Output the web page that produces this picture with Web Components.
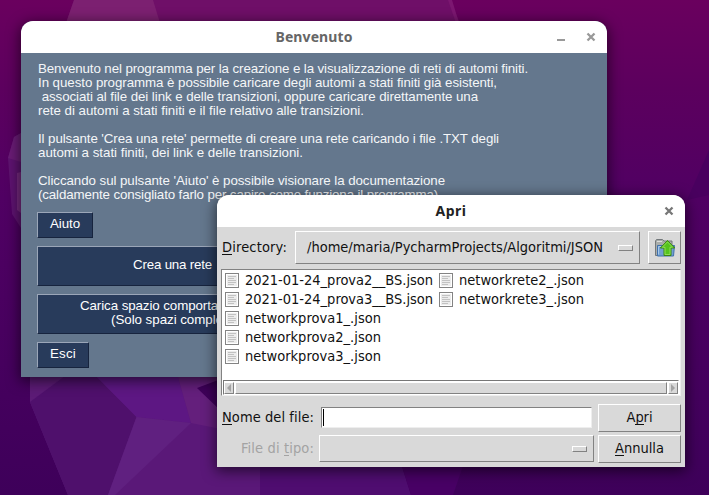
<!DOCTYPE html>
<html lang="it"><head><meta charset="utf-8"><title>Benvenuto</title>
<style>html,body{margin:0;width:709px;height:495px;overflow:hidden}</style></head><body>
<desk-top></desk-top>
<script>
const define=(name,html,setup)=>customElements.define(name,class extends HTMLElement{
  constructor(){super();const t=document.createElement('template');t.innerHTML=html;
    this.attachShadow({mode:'open'}).append(t.content.cloneNode(true));}
  connectedCallback(){if(setup)setup(this,this.shadowRoot);}
});

/* Text run whose tracking is adjusted to a given width */
define('fit-text',`<style>:host{display:block;white-space:pre;width:max-content}span{display:inline-block}</style><span><slot></slot></span>`,(el,r)=>{
  const s=r.querySelector('span'),w=+el.getAttribute('w'),n=el.textContent.length;
  if(w){const d=(w-s.getBoundingClientRect().width)/n;s.style.letterSpacing=d+'px';}
});

define('app-window',`<style>
:host{display:flex;flex-direction:column;box-sizing:border-box;border-radius:12px 12px 0 0;overflow:hidden;background:var(--body);box-shadow:0 3px 14px 1px rgba(0,0,0,.6)}
header{height:32px;flex:none;background:#fff;display:grid;grid-template-columns:1fr auto 1fr;align-items:center;font:bold 14px "Noto Sans","Open Sans",sans-serif;color:var(--title)}
.c{grid-column:2;margin-top:-2px}.b{display:flex;justify-content:flex-end;gap:20px;padding-right:11px;align-items:center}
main{flex:1;min-height:0;display:flex;flex-direction:column}
</style><header><div class="c"><slot name="title"></slot></div><div class="b"><slot name="controls"></slot></div></header><main><slot></slot></main>`);

define('win-icon',`<style>:host{display:block;width:10px;height:10px;color:var(--ic)}svg{display:block}</style><svg width="10" height="10"></svg>`,(el,r)=>{
  r.querySelector('svg').innerHTML=el.getAttribute('kind')==='min'?'<path d="M1 7h8v2H1z" fill="currentColor"/>':'<path d="M1.500 1.500l7 7M8.500 1.500L1.500 8.500" stroke="currentColor" stroke-width="2.3"/>';
});

define('navy-button',`<style>:host{display:flex;box-sizing:border-box;border:1px solid;border-color:#9ba6b8 #17243e #17243e #9ba6b8;background:#283b5b;flex-direction:column;align-items:center;justify-content:center;color:#fff;line-height:14px}</style><slot></slot>`);

define('welcome-body',`<style>
:host{display:flex;flex-direction:column;align-items:flex-start;gap:8px;padding:8px 16px;font:13.33px/14px "Liberation Sans",Arial,sans-serif;color:#f4f6f8}
.t{padding:1px 0 0 1px;height:142px}.t p{margin:0 0 14px}
.a{width:56px;height:26px;padding-bottom:2px}.wide{width:271px;height:40px}.wide.p{padding-bottom:3px}.wide.q{padding-bottom:2px}.e{width:52px;height:26px;padding-bottom:2px}
</style><div class="t">
<p><fit-text w="490">Benvenuto nel programma per la creazione e la visualizzazione di reti di automi finiti.</fit-text><fit-text w="459">In questo programma è possibile caricare degli automi a stati finiti già esistenti,</fit-text><fit-text w="440"> associati al file dei link e delle transizioni, oppure caricare direttamente una</fit-text><fit-text w="326">rete di automi a stati finiti e il file relativo alle transizioni.</fit-text></p>
<p><fit-text w="461">Il pulsante 'Crea una rete' permette di creare una rete caricando i file .TXT degli</fit-text><fit-text w="265">automi a stati finiti, dei link e delle transizioni.</fit-text></p>
<p><fit-text w="407">Cliccando sul pulsante 'Aiuto' è possibile visionare la documentazione</fit-text><fit-text w="400">(caldamente consigliato farlo per capire come funziona il programma)</fit-text></p></div>
<navy-button class="a"><fit-text w="30">Aiuto</fit-text></navy-button>
<navy-button class="wide p"><fit-text w="79">Crea una rete</fit-text></navy-button>
<navy-button class="wide q"><fit-text w="185">Carica spazio comportamentale</fit-text><fit-text w="123">(Solo spazi completi)</fit-text></navy-button>
<navy-button class="e"><fit-text w="26">Esci</fit-text></navy-button>`);

define('raised-box',`<style>:host{display:flex;box-sizing:border-box;align-items:center;border:1px solid;border-color:#fff #828282 #828282 #fff;background:#d9d9d9}</style><slot></slot>`);

define('file-item',`<style>:host{display:flex;height:19px;gap:6px;align-items:center}svg{display:block;flex:none;margin-top:-1px}</style>
<svg width="14" height="15" shape-rendering="crispEdges"><rect x=".5" y=".5" width="13" height="14" fill="#fff" stroke="#838383"/><rect x="2" y="2" width="10" height="11" fill="#ececec"/><path d="M3 3.5h8M3 5.5h6M3 7.5h8M3 9.5h8M3 11.5h6" stroke="#c2c2c2"/></svg><slot></slot>`);

define('scroll-bar',`<style>:host{display:flex;box-sizing:border-box;height:15px;border:1px solid;border-color:#777 #fff #fff #777;background:#fff;gap:1px;padding:1px 0 0 0}
raised-box{height:12px}.a{width:10px;flex:none;justify-content:center}.b{flex:1}svg{display:block}</style>
<raised-box class="a"><svg width="6" height="8"><path d="M5 0v8L1 4z" fill="#a3a3a3"/></svg></raised-box><raised-box class="b"></raised-box><raised-box class="a"><svg width="6" height="8"><path d="M1 0v8l4-4z" fill="#a3a3a3"/></svg></raised-box>`);

define('folder-up',`<style>:host,svg{display:block}</style><svg width="22" height="20" viewBox="0 0 22 20">
<path d="M1.500 17.500V3l1-1.500h6L10 3h8v14.500z" fill="#a9adaa" stroke="#73787b"/><path d="M3 3.500h5" stroke="#ddd"/>
<path d="M3.500 7.500h17l-1 10.500h-16z" fill="#719fd0" stroke="#3f70ac"/><path d="M4.500 8.500h14M4.500 8.500v8" fill="none" stroke="#a8c8e8"/>
<path d="M13.500 2.500L20.700 10h-3.700v7.500h-7V10H6.300z" fill="#55c41c" stroke="#3d840f"/><path d="M8.300 9.300L13.500 3.900l5.100 5.300H16v7.300h-5V9.300z" fill="none" stroke="#94e05f" stroke-width=".9"/></svg>`);

define('open-body',`<style>
:host{display:flex;flex-direction:column;padding:4px 4px 0;font:14.5px/19px "DejaVu Sans Condensed","DejaVu Sans",sans-serif;font-stretch:condensed;color:#111}
.r{display:flex;align-items:center}
.dir{height:33px}.dir .l{width:74px;padding-left:1px;box-sizing:border-box}.d{width:345px;height:33px;padding:0 6px 0 11px;justify-content:space-between}.up{width:33px;height:33px;margin-left:8px;justify-content:center}
.n{width:15px;height:6px}
.list{margin-top:5px;height:127px;box-sizing:border-box;border:1px solid;border-color:#828282 #eee #eee #828282;background:#fff;display:flex;flex-direction:column;justify-content:space-between;padding:1px 1px 0 1px}
.cols{display:flex;gap:6px;padding-left:2px}
.foot{display:grid;grid-template-columns:93px 1fr 83px;margin-top:8px;row-gap:3px}
.foot .l{justify-self:end;align-self:center}
.foot fit-text{margin-top:-2px}
.entry{width:271px;height:21px;box-sizing:border-box;border:1px solid;border-color:#828282 #eee #eee #828282;background:#fff;margin:3px 0 0 7px;padding:1px}.entry i{display:block;width:1px;height:17px;background:#000}
.b{height:28px;justify-content:center}.type{width:275px;height:27px;margin-left:5px;justify-content:flex-end;padding-right:6px;box-sizing:border-box}
.g{color:#a3a3a3}u{text-decoration:none;background:linear-gradient(currentColor,currentColor) 0 100%/100% 1px no-repeat}
</style>
<div class="r dir"><div class="l"><fit-text w="65"><u>D</u>irectory:</fit-text></div><raised-box class="d"><fit-text w="296">/home/maria/PycharmProjects/Algoritmi/JSON</fit-text><raised-box class="n"></raised-box></raised-box><raised-box class="up"><folder-up></folder-up></raised-box></div>
<div class="list"><div class="cols"><div>
<file-item><fit-text w="188">2021-01-24_prova2__BS.json</fit-text></file-item><file-item><fit-text w="188">2021-01-24_prova3__BS.json</fit-text></file-item><file-item><fit-text w="136">networkprova1_.json</fit-text></file-item><file-item><fit-text w="136">networkprova2_.json</fit-text></file-item><file-item><fit-text w="136">networkprova3_.json</fit-text></file-item></div><div>
<file-item><fit-text w="125">networkrete2_.json</fit-text></file-item><file-item><fit-text w="125">networkrete3_.json</fit-text></file-item></div></div><scroll-bar></scroll-bar></div>
<div class="foot"><div class="l"><fit-text w="92"><u>N</u>ome del file:</fit-text></div><div class="entry"><i></i></div><raised-box class="b"><fit-text w="26">A<u>p</u>ri</fit-text></raised-box>
<div class="l g"><fit-text w="73">File di <u>t</u>ipo:</fit-text></div><raised-box class="type"><raised-box class="n"></raised-box></raised-box><raised-box class="b"><fit-text w="49"><u>A</u>nnulla</fit-text></raised-box></div>`);

define('desk-top',`<style>
:host{display:block;position:relative;width:709px;height:495px;overflow:hidden}
.bg{display:block}app-window{position:absolute}
.w{left:21px;top:21px;width:586px;height:356px;--body:#64778d;--title:#666;--ic:#999}
.o{left:217px;top:195px;width:468px;height:272px;--body:#d9d9d9;--title:#222;--ic:#777}
</style>
<svg class="bg" width="709" height="495"><defs><linearGradient id="g" x1="0" y1="0" x2="0" y2="1"><stop offset="0" stop-color="#6a005e"/><stop offset=".18" stop-color="#5c005e"/><stop offset=".4" stop-color="#500063"/><stop offset="1" stop-color="#3e005a"/></linearGradient></defs>
<rect width="709" height="495" fill="url(#g)"/>
<path d="M74 0L66 23H460L450 0z" fill="#6f0f68"/><path d="M74 0L66 23H160L153 0z" fill="#7c2071"/><path d="M448 0l8 23h3L452 0z" fill="#7c1771"/>
<path d="M21 133l-7 4-6 21 4 56 9 14z" fill="#5e1370"/><path d="M21 133l-7 4-6 21 13 4z" fill="#6a1c76"/><path d="M21 172l-4 1v37l4 3z" fill="#772a80"/>
<path d="M30 370H260V495H68L30 402z" fill="#5a1878"/><path d="M30 370H73L30 402z" fill="#5c1b76"/>
<path d="M73 370H90L136.500 417 108 495H68L30 402z" fill="#4f106c"/><path d="M90 370h86l15 53-54.500-6z" fill="#5d1783"/>
<path d="M136.500 417l54.500 6-76 72h-7z" fill="#602080"/><path d="M176 370h50v60l-35-7z" fill="#641f7c"/><path d="M197 388l24-9v32z" fill="#3f005b"/>
<path d="M260 460h140l11 35H260z" fill="#4f0d70"/><path d="M400 460l11 35h42l12-35z" fill="#480065"/><path d="M709 150l-22 50 22-5z" fill="#49005f"/></svg>
<app-window class="w"><fit-text slot="title" w="77">Benvenuto</fit-text><win-icon slot="controls" kind="min"></win-icon><win-icon slot="controls" kind="close"></win-icon><welcome-body></welcome-body></app-window>
<app-window class="o"><fit-text slot="title" w="31">Apri</fit-text><win-icon slot="controls" kind="close"></win-icon><open-body></open-body></app-window>`);
</script></body></html>
